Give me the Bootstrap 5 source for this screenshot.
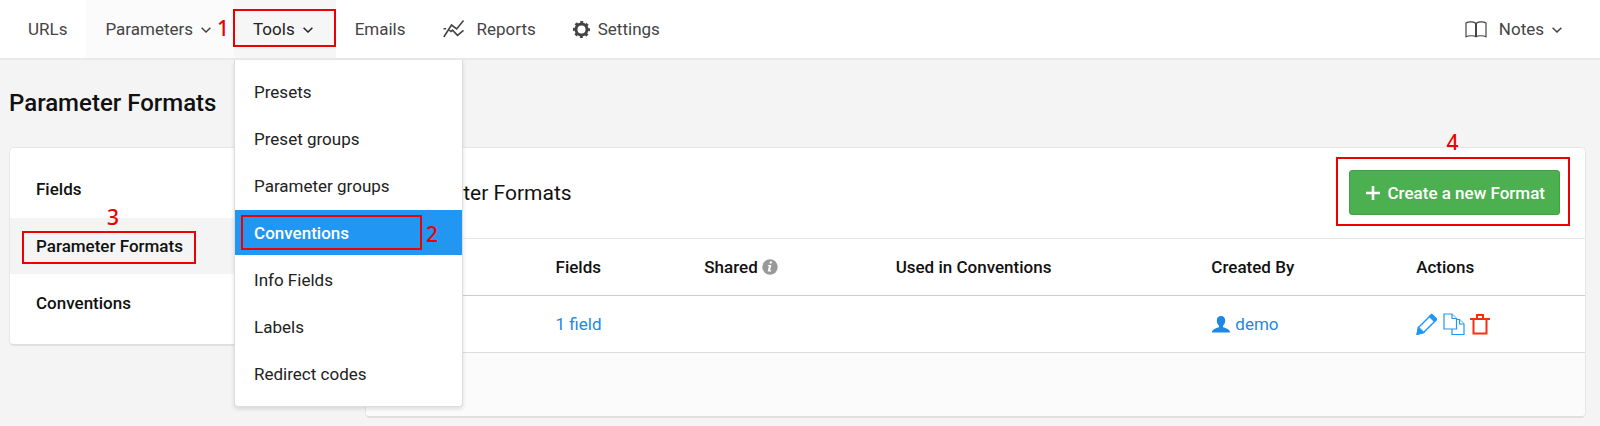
<!DOCTYPE html>
<html lang="en">
<head>
<meta charset="utf-8">
<meta name="viewport" content="width=device-width, initial-scale=1">
<title>Parameter Formats</title>
<link href="https://cdn.jsdelivr.net/npm/bootstrap@5.3.0/dist/css/bootstrap.min.css" rel="stylesheet">
<style>
  body { background: #f4f4f4; color: #111; font-family: Roboto, sans-serif; font-size: 17px; line-height: 24px; }
  a { color: #1e88e5; text-decoration: none; }
  .topbar { padding: 0 15px 0 9px; border-bottom: 2px solid #e9e9e9; }
  .topbar .nav-link { height: 58px; padding: 0 19px; display: flex; align-items: center; color: #444; }
  .topbar .nav-link.with-icon { padding-left: 18px; }
  .topbar .nav-link.hovered { background: #fbfbfb; }
  .topbar .nav-link.opened { background: #f6f6f6; color: #222; }
  .chevron { width: 10px; height: 6px; margin: 2px 4px 0 8px; }
  .tools-menu { top: 60px; left: 0; width: 229px; margin: 0; padding: 9px 0 10px; border: 1px solid #ddd; border-top: 0; border-radius: 0 0 4px 4px; box-shadow: 0 2px 4px rgba(0,0,0,.12); font-size: 17px; }
  .tools-menu li + li { margin-top: 2px; }
  .tools-menu .dropdown-item { padding: 11px 19px 10px; color: #222; }
  .tools-menu .dropdown-item.active { background: #2196f3; color: #fff; font-weight: 500; }
  main.container-fluid { padding: 27px 14px 8px 9px; }
  .page-title { margin: 0 0 28px; font-size: 24px; line-height: 32px; font-weight: 500; }
  .columns { gap: 20px; }
  .panel { background: #fff; border: 1px solid #e6e6e6; border-bottom: 2px solid #e0e0e0; border-radius: 5px; }
  .side-panel { width: 336px; padding: 13px 0; }
  .side-panel li + li { margin-top: 1px; }
  .side-panel .nav-link { padding: 16px 26px; color: #111; font-weight: 500; }
  .side-panel .nav-link.active { background: #f4f4f4; }
  .panel-head { padding: 22px 25px 23px; border-bottom: 1px solid #e6e6e6; }
  .panel-title { font-size: 21px; line-height: 28px; font-weight: 400; }
  .btn-create { background: #4caf50; border: 1px solid #43a047; color: #fff; font-size: 17px; line-height: 24px; font-weight: 500; padding: 10px 14px 9px 16px; border-radius: 3px; }
  .format-table { table-layout: fixed; --bs-table-bg: transparent; color: #111; }
  .format-table > :not(caption) > * > * { padding: 16px 25px; border-bottom: 1px solid #ddd; }
  .format-table > thead > tr > th { font-weight: 500; border-bottom-color: #ccc; }
  .c-name { width: 13.5%; } .c-fields { width: 12.2%; } .c-shared { width: 15.7%; } .c-used { width: 25.9%; } .c-created { width: 16.8%; }
  .actions { gap: 5px; height: 24px; }
  .panel-foot { height: 63px; background: #fbfbfb; border-radius: 0 0 5px 5px; }
  /* numbered walkthrough marks drawn over the controls */
  .mark-box { position: absolute; border: 2px solid #ee0000; pointer-events: none; }
  .mark-num { position: absolute; color: #ee0000; font: 500 21px/24px "Noto Sans", sans-serif; pointer-events: none; }
  .m1 { inset: 9px 0 11px -1px; } .m1 .mark-num { left: -18px; top: 5px; }
  .m2 { inset: 5px 40px 5px 6px; } .m2 .mark-num { right: -18px; top: 5px; }
  .m3 { inset: 13px auto 10px 12px; width: 174px; } .m3 .mark-num { left: 83px; top: -28px; }
  .m4 { inset: -13px -10px -11px -13px; } .m4 .mark-num { left: 109px; top: -29px; }
</style>
</head>
<body>
<nav class="topbar bg-white d-flex justify-content-between" aria-label="Main">
  <ul class="nav flex-nowrap">
    <li class="nav-item"><a class="nav-link" href="#">URLs</a></li>
    <li class="nav-item"><a class="nav-link hovered" href="#">Parameters
      <svg class="chevron" viewBox="0 0 10 6" fill="none" stroke="currentColor" stroke-width="1.5"><path d="M.6.7 5 5 9.4.7"/></svg></a></li>
    <li class="nav-item dropdown">
      <a class="nav-link opened" href="#" aria-expanded="true">Tools
        <svg class="chevron" viewBox="0 0 10 6" fill="none" stroke="currentColor" stroke-width="1.5"><path d="M.6.7 5 5 9.4.7"/></svg></a>
      <div class="mark-box m1"><span class="mark-num">1</span></div>
      <ul class="dropdown-menu tools-menu show">
        <li><a class="dropdown-item" href="#">Presets</a></li>
        <li><a class="dropdown-item" href="#">Preset groups</a></li>
        <li><a class="dropdown-item" href="#">Parameter groups</a></li>
        <li class="position-relative"><a class="dropdown-item active" href="#">Conventions</a><div class="mark-box m2"><span class="mark-num">2</span></div></li>
        <li><a class="dropdown-item" href="#">Info Fields</a></li>
        <li><a class="dropdown-item" href="#">Labels</a></li>
        <li><a class="dropdown-item" href="#">Redirect codes</a></li>
      </ul>
    </li>
    <li class="nav-item"><a class="nav-link" href="#">Emails</a></li>
    <li class="nav-item"><a class="nav-link with-icon" href="#">
      <svg class="me-2" width="22" height="18" viewBox="0 0 22 18" fill="none" stroke="currentColor" stroke-width="1.6"><path d="M.8 17 8.500 5l5.200 4L20.500.6M.5 8.800h2.500M5.500 9.500l2.500 2 1.500-1.300 5 5.200 6-5"/></svg>
      <span class="ps-1">Reports</span></a></li>
    <li class="nav-item"><a class="nav-link with-icon" href="#">
      <svg width="17" height="17" viewBox="0 0 16 16" fill="none" stroke="currentColor"><circle cx="8" cy="8" r="5.200" stroke-width="2.800"/><circle cx="8" cy="8" r="6.900" stroke-width="2.200" stroke-dasharray="2.700 2.719" stroke-dashoffset="1.300"/></svg>
      <span class="ps-2">Settings</span></a></li>
  </ul>
  <ul class="nav flex-nowrap">
    <li class="nav-item"><a class="nav-link with-icon" href="#">
      <svg class="me-2" width="22" height="17" viewBox="0 0 22 17" fill="none" stroke="currentColor" stroke-width="1.200"><path d="M11 3C10 .3 3.500.3 1 2v13.800c2.500-1.400 8.500-1.400 10 0 1.500-1.400 7.500-1.400 10 0V2C18.500.3 12 .3 11 3Z"/><path d="M11 2.500v13.500" stroke-width="2"/></svg>
      <span class="ps-1">Notes</span>
      <svg class="chevron" viewBox="0 0 10 6" fill="none" stroke="currentColor" stroke-width="1.5"><path d="M.6.7 5 5 9.4.7"/></svg></a></li>
  </ul>
</nav>

<main class="container-fluid">
  <h1 class="page-title">Parameter Formats</h1>
  <div class="d-flex align-items-start columns">
    <aside class="panel side-panel flex-shrink-0">
      <ul class="nav flex-column">
        <li><a class="nav-link" href="#">Fields</a></li>
        <li class="position-relative"><a class="nav-link active" href="#">Parameter Formats</a><div class="mark-box m3"><span class="mark-num">3</span></div></li>
        <li><a class="nav-link" href="#">Conventions</a></li>
      </ul>
    </aside>
    <section class="panel flex-grow-1">
      <header class="panel-head d-flex justify-content-between align-items-center">
        <h2 class="panel-title mb-0">Parameter Formats</h2>
        <div class="position-relative">
          <button type="button" class="btn btn-create d-flex align-items-center">
            <svg class="me-2" width="14" height="14" viewBox="0 0 14 14" fill="none" stroke="currentColor" stroke-width="2.600"><path d="M7 0v14M0 7h14"/></svg>Create a new Format</button>
          <div class="mark-box m4"><span class="mark-num">4</span></div>
        </div>
      </header>
      <table class="table format-table mb-0">
        <thead><tr>
          <th class="c-name" scope="col">Name</th><th class="c-fields" scope="col">Fields</th>
          <th class="c-shared" scope="col"><span class="d-flex align-items-center">Shared
            <svg class="ms-1" width="16" height="16" viewBox="0 0 16 16"><circle cx="8" cy="8" r="7.700" fill="#999"/><path d="M7.900 2.600h2.200l-.4 2H7.500zM6 6h3.300l-1.200 5.300h1.200l-.2 1.200H5.700L6.900 7.100H5.800z" fill="#fff"/></svg></span></th>
          <th class="c-used" scope="col">Used in Conventions</th><th class="c-created" scope="col">Created By</th><th scope="col">Actions</th>
        </tr></thead>
        <tbody><tr>
          <td>demo</td><td><a href="#">1 field</a></td><td></td><td></td>
          <td><a class="d-flex align-items-center" href="#"><svg class="me-1" width="20" height="17" viewBox="0 0 20 17" fill="currentColor"><path d="M10 0c2.800 0 4.200 1.800 4.200 4.500 0 2.300-1 4.300-2.200 5.300v1.500c3 .9 7 2 7 5.200H1c0-3.200 4-4.300 7-5.200V9.800C6.800 8.800 5.800 6.800 5.800 4.500 5.800 1.800 7.200 0 10 0Z"/></svg>demo</a></td>
          <td><div class="d-flex align-items-center actions">
            <a href="#" class="d-flex" aria-label="Edit"><svg width="22" height="22" viewBox="0 0 22 22" fill="none" stroke="#2196f3" stroke-width="1.400"><path d="M2.500 14.500 14.800 2.200q1-1 2 0l3 3q1 1 0 2L7.500 19.500l-6.300 1.700z"/><path d="m2.500 14.500 5 5-6.300 1.700zM13.500 3.500l5 5 1.800-2-4.800-5z" fill="#2196f3"/></svg></a>
            <a href="#" class="d-flex" aria-label="Copy"><svg width="22" height="22" viewBox="0 0 22 22" fill="#fff" stroke="#2196f3" stroke-width="1.200"><path d="M9 6.500h7.500l4.500 4.500v10.500H9z"/><path d="M16.500 6.500V11H21"/><path d="M1 1h8l4.500 4.500V16H1z"/><path d="M9 1v4.500h4.500"/></svg></a>
            <a href="#" class="d-flex" aria-label="Delete"><svg width="20" height="22" viewBox="0 0 20 22" fill="none" stroke="#f62d17" stroke-width="2"><path d="M0 6h20M3.500 6v14.500h13V6M7 5.500V2h6v3.500"/></svg></a>
          </div></td>
        </tr></tbody>
      </table>
      <div class="panel-foot"></div>
    </section>
  </div>
</main>
<script src="https://cdn.jsdelivr.net/npm/bootstrap@5.3.0/dist/js/bootstrap.bundle.min.js"></script>
</body>
</html>
